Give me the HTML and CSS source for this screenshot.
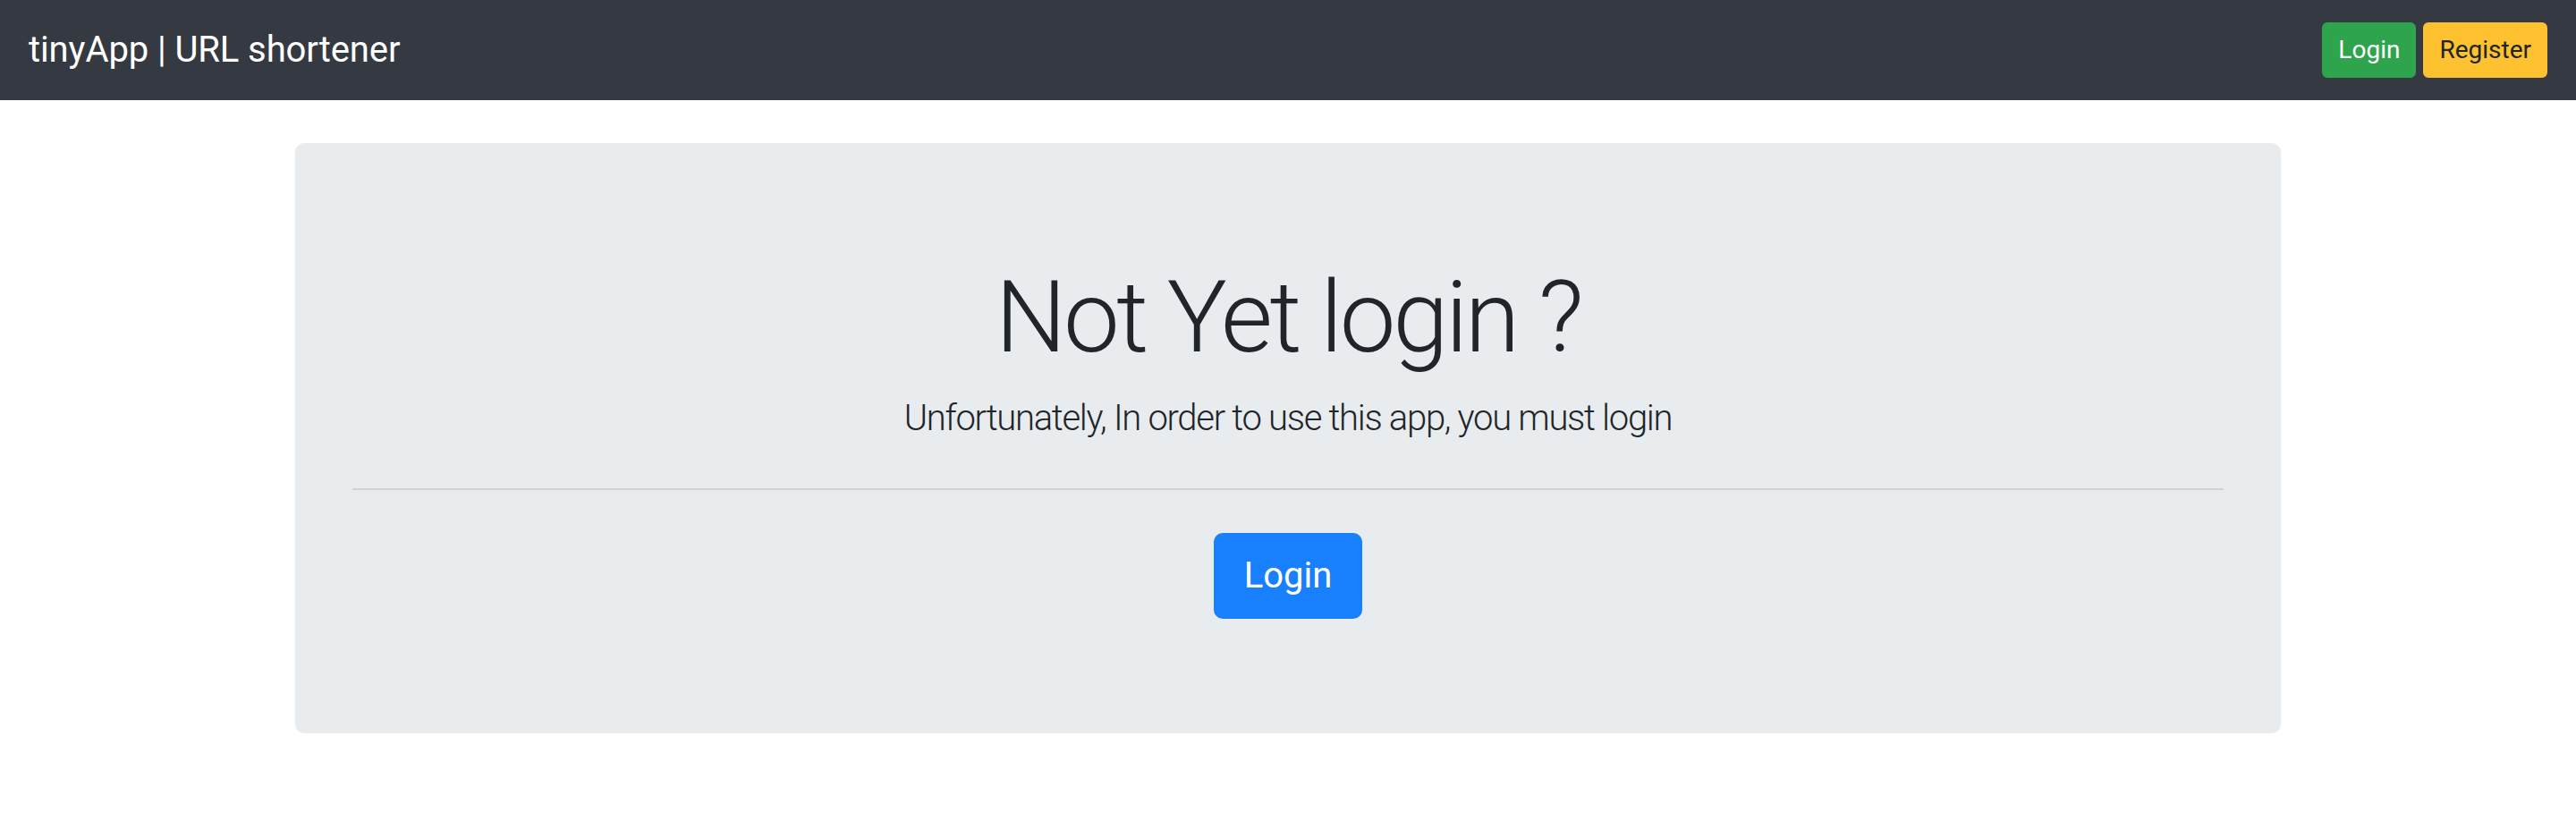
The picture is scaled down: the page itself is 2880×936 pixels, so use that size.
FILE: index.html
```html
<!DOCTYPE html>
<html lang="en">
<head>
<meta charset="utf-8">
<title>tinyApp | URL shortener</title>
<link rel="stylesheet" href="styles.css">
</head>
<body>
  <nav class="navbar">
    <a class="brand" href="#">tinyApp | URL shortener</a>
    <div class="nav-actions">
      <a class="btn btn-sm btn-success" href="#">Login</a>
      <a class="btn btn-sm btn-warning" href="#">Register</a>
    </div>
  </nav>
  <main class="container">
    <section class="jumbotron">
      <h1 class="display">Not Yet login ?</h1>
      <p class="lead">Unfortunately, In order to use this app, you must login</p>
      <hr class="divider">
      <p class="actions"><a class="btn btn-lg btn-primary" href="#">Login</a></p>
    </section>
  </main>
</body>
</html>
```
FILE: styles.css
```css
html { font-size: 32px; }
* { box-sizing: border-box; }
body {
  margin: 0;
  font-family: Roboto, Inter, "Liberation Sans", sans-serif;
  font-size: 1rem;
  line-height: 1.5;
  color: #212529;
  background: #fff;
}
a { text-decoration: none; }

.navbar {
  display: flex;
  align-items: center;
  justify-content: space-between;
  padding: 16px 32px;
  background: #353a42;
}
.brand {
  display: inline-block;
  padding: 10px 0;
  font-size: 40px;
  line-height: 60px;
  color: #fff;
  letter-spacing: -0.1px;
}
.nav-actions {
  display: flex;
  gap: 8px;
}
.btn {
  display: inline-block;
  border: 2px solid transparent;
  text-align: center;
  font-weight: 400;
}
.btn-sm {
  font-size: 28px;
  line-height: 42px;
  padding: 8px 16px;
  border-radius: 6px;
}
.btn-lg {
  font-size: 40px;
  line-height: 60px;
  padding: 16px 32px;
  border-radius: 10px;
}
.btn-success { background: #2ea54c; border-color: #2ea54c; color: #fff; }
.btn-warning { background: #fec12f; border-color: #fec12f; color: #212529; }
.btn-primary { background: #1880fc; border-color: #1880fc; color: #fff; }

.container {
  max-width: 2280px;
  margin: 48px auto 0;
  padding: 0 30px;
}
.jumbotron {
  background: #e8ecef;
  border-radius: 10px;
  padding: 128px 64px;
  text-align: center;
}
.display {
  margin: 0 0 16px;
  font-size: 112px;
  font-weight: 300;
  line-height: 1.2;
  letter-spacing: -3.4px;
}
.lead {
  margin: 0;
  font-size: 40px;
  font-weight: 300;
  line-height: 60px;
  letter-spacing: -1.3px;
}
.divider {
  margin: 48px 0;
  border: 0;
  border-top: 2px solid rgba(0,0,0,0.1);
  height: 0;
}
.actions { margin: 0; }
```
